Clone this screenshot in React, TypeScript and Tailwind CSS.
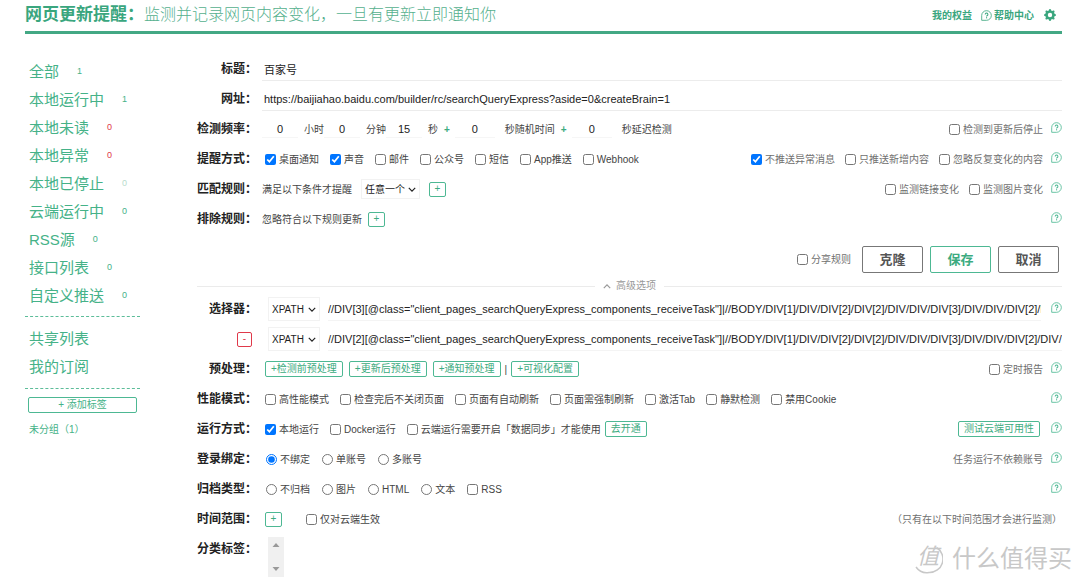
import React, { useId } from 'react';
import { BsGearFill } from 'react-icons/bs';

function HelpIcon() {
  return (
    <svg viewBox="0 0 24 24" className="size-[11px] shrink-0" fill="none" stroke="currentColor" strokeWidth="1.8">
      <path d="M1.500 22.500V12A10.500 10.500 0 1 1 12 22.500H1.500Z" strokeLinejoin="round" />
      <path d="M9.200 9.600a2.900 2.900 0 1 1 4.400 2.500c-1.100.7-1.500 1-1.500 2" strokeWidth="2.200" />
      <path d="M10.900 17h2.400" strokeWidth="2.400" />
    </svg>
  );
}

function Help() {
  return (
    <button type="button" aria-label="帮助" className="mb-1 shrink-0 text-[#4db893]">
      <HelpIcon />
    </button>
  );
}

function Chevron({ up = false }: { up?: boolean }) {
  return (
    <svg viewBox="0 0 10 6" className="h-[5px] w-2 shrink-0" fill="none" stroke="currentColor" strokeWidth="1.5">
      <path d={up ? 'M1 5 5 1l4 4' : 'M1 1l4 4 4-4'} />
    </svg>
  );
}

type RowProps = {
  label?: React.ReactNode;
  htmlFor?: string;
  children?: React.ReactNode;
  right?: React.ReactNode;
  help?: boolean;
};

function Row({ label, htmlFor, children, right, help = false }: RowProps) {
  return (
    <div className="flex h-[30px] items-center">
      <div className="flex w-[60px] shrink-0 justify-end text-xs font-bold whitespace-nowrap text-[#222]">
        {htmlFor ? <label htmlFor={htmlFor}>{label}</label> : label}
      </div>
      <div className="ml-2 flex min-w-0 flex-1 items-center">{children}</div>
      <div className="flex shrink-0 items-center gap-2 text-[#707070]">
        {right && <div className="flex items-center gap-[10px]">{right}</div>}
        {help && <Help />}
      </div>
    </div>
  );
}

function Check({ children, checked = false }: { children: string; checked?: boolean }) {
  return (
    <label className="flex shrink-0 items-center gap-[3px] whitespace-nowrap">
      <input type="checkbox" defaultChecked={checked} className="m-0 size-[11px]" />
      {children}
    </label>
  );
}

function Radio({ children, name, checked = false }: { children: string; name: string; checked?: boolean }) {
  return (
    <label className="flex shrink-0 items-center gap-[3px] whitespace-nowrap">
      <input type="radio" name={name} defaultChecked={checked} className="m-0 size-[11px]" />
      {children}
    </label>
  );
}

function Plus({ label }: { label: string }) {
  return (
    <button
      type="button"
      aria-label={label}
      className="flex h-[15px] w-[17px] items-center justify-center rounded-[2px] border border-[#4db893] text-[10px] leading-none text-[#3cab80]"
    >
      +
    </button>
  );
}

function Tag({ children }: { children: string }) {
  return (
    <button
      type="button"
      className="flex h-4 shrink-0 items-center rounded-[2px] border border-[#4db893] px-[5px] text-[10px] leading-none whitespace-nowrap text-[#3cab80]"
    >
      {children}
    </button>
  );
}

function Num({ value, label, wide = false }: { value: string; label: string; wide?: boolean }) {
  return (
    <input
      aria-label={label}
      defaultValue={value}
      className={`${wide ? 'ml-[5px] w-10' : 'w-9'} h-[18px] border-b border-[#f6f6f6] text-center text-[11px] text-[#222]`}
    />
  );
}

function Choice({ options, label, framed = false }: { options: string[]; label: string; framed?: boolean }) {
  return (
    <span className={`relative flex shrink-0 items-center border border-[#f2f2f2] text-[#222] ${framed ? 'h-6 w-[52px]' : 'h-5 w-[59px]'}`}>
      <select aria-label={label} className="h-full w-full appearance-none bg-transparent pl-[3px] text-[10px]">
        {options.map((o) => (
          <option key={o}>{o}</option>
        ))}
      </select>
      <span className="pointer-events-none absolute right-[3px]">
        <Chevron />
      </span>
    </span>
  );
}

function Field({ id, value }: { id: string; value: string }) {
  return (
    <div className="-ml-[3px] flex-1 border-b border-[#ececec]">
      <input id={id} defaultValue={value} className="block h-[23px] w-full pl-[2px] text-[11px] text-[#222]" />
    </div>
  );
}

const tail = 'DIV/DIV[2]/DIV[2]/DIV/DIV/DIV[3]/DIV/DIV/DIV[2]/DIV/DIV/DIV[1]/DIV';

function XPath({ index, label }: { index: number; label: string }) {
  return (
    <div className="ml-[3px] flex min-w-0 flex-1 items-center gap-2">
      <Choice framed options={['XPATH', 'CSS', 'JS']} label={`${label}类型`} />
      <input
        aria-label={label}
        defaultValue={`//DIV[${index}][@class="client_pages_searchQueryExpress_components_receiveTask"]|//BODY/DIV[1]/${tail}`}
        className="h-6 min-w-0 flex-1 border-b border-[#f4f4f4] text-[11px] text-[#222]"
      />
    </div>
  );
}

const lists = [
  { name: '全部', count: 1 },
  { name: '本地运行中', count: 1 },
  { name: '本地未读', count: 0, tone: 'text-[#e0394a]' },
  { name: '本地异常', count: 0, tone: 'text-[#e0394a]' },
  { name: '本地已停止', count: 0, tone: 'text-[#b9dccd]' },
  { name: '云端运行中', count: 0 },
  { name: 'RSS源', count: 0 },
  { name: '接口列表', count: 0 },
  { name: '自定义推送', count: 0 },
];

function Sidebar() {
  return (
    <aside className="w-[115px] shrink-0 text-[#45b288]">
      <nav className="flex flex-col border-b border-dashed border-[#5cbd99] pt-1 pb-[6px] pl-1">
        {lists.map((l) => (
          <a key={l.name} href="#" className="flex h-7 items-center gap-[18px] text-[15px] whitespace-nowrap">
            {l.name}
            <span className={`text-[9px] ${l.tone ?? ''}`}>{l.count}</span>
          </a>
        ))}
      </nav>
      <nav className="flex flex-col border-b border-dashed border-[#5cbd99] pt-2 pb-[7px] pl-1">
        {['共享列表', '我的订阅'].map((n) => (
          <a key={n} href="#" className="flex h-7 items-center text-[15px]">
            {n}
          </a>
        ))}
      </nav>
      <div className="px-[3px] pt-2 text-[10px]">
        <button
          type="button"
          className="flex h-4 w-full items-center justify-center rounded-[2px] border border-[#4db893] leading-none"
        >
          + 添加标签
        </button>
        <a href="#" className="mt-[9px] block pl-px leading-4">
          未分组（1）
        </a>
      </div>
    </aside>
  );
}

function Action({ children, primary = false }: { children: string; primary?: boolean }) {
  return (
    <button
      type="button"
      className={`h-[27px] w-[61px] rounded-[2px] border text-[13px] leading-none font-bold ${
        primary ? 'border-[#4db893] text-[#3cab80]' : 'border-[#777] text-[#555]'
      }`}
    >
      {children}
    </button>
  );
}

function Watermark() {
  return (
    <div className="pointer-events-none absolute right-2 bottom-[7px] flex items-center gap-[9px] text-[#c8c8c8]">
      <span className="relative flex size-[30px] items-center justify-center">
        <svg viewBox="0 0 30 30" className="absolute inset-0" fill="none" stroke="currentColor" strokeWidth="1.5">
          <path d="M23.500 3.500A13.500 13.500 0 0 1 16 28.500Q8 30 3 23" />
        </svg>
        <span className="-mt-1 text-[22px] leading-none italic">值</span>
      </span>
      <span className="text-[24px] leading-9">什么值得买</span>
    </div>
  );
}

export default function App() {
  const id = useId();
  return (
    <div className="relative bg-white pr-[18px] pb-[7px] pl-[25px] font-['Liberation_Sans','Noto_Sans_CJK_SC',sans-serif] text-[10px] text-[#444]">
      <header className="flex h-[34px] items-center justify-between border-b-[3px] border-[#43a884] pb-px">
        <h1 className="flex items-center text-base whitespace-nowrap text-[#55b08e]">
          <strong className="text-[17px] text-[#3aa67e]">网页更新提醒：</strong>
          <span className="font-light">监测并记录网页内容变化，一旦有更新立即通知你</span>
        </h1>
        <div className="flex items-center pr-[6px] font-bold text-[#3aa67e]">
          <a href="#">我的权益</a>
          <a href="#" className="ml-[9px] flex items-center gap-[2px]">
            <HelpIcon />
            帮助中心
          </a>
          <button type="button" aria-label="设置" className="ml-[10px]">
            <BsGearFill className="size-3" />
          </button>
        </div>
      </header>

      <div className="flex gap-[57px] pt-5">
        <Sidebar />
        <main className="min-w-0 flex-1">
          <Row label="标题：" htmlFor={`${id}title`}>
            <Field id={`${id}title`} value="百家号" />
          </Row>
          <Row label="网址：" htmlFor={`${id}url`}>
            <Field
              id={`${id}url`}
              value="https://baijiahao.baidu.com/builder/rc/searchQueryExpress?aside=0&createBrain=1"
            />
          </Row>
          <Row label="检测频率：" right={<Check>检测到更新后停止</Check>} help>
            <div className="-ml-[3px] flex items-center whitespace-nowrap">
              <Num value="0" label="小时" />
              <span className="ml-[6px]">小时</span>
              <Num value="0" label="分钟" />
              <span className="ml-[6px]">分钟</span>
              <Num value="15" label="秒" />
              <span className="ml-[6px]">秒</span>
              <span className="ml-[6px] font-bold text-[#3cab80]">+</span>
              <Num wide value="0" label="随机秒数" />
              <span className="ml-[10px]">秒随机时间</span>
              <span className="ml-[6px] font-bold text-[#3cab80]">+</span>
              <Num wide value="0" label="延迟秒数" />
              <span className="ml-[10px]">秒延迟检测</span>
            </div>
          </Row>
          <Row
            label="提醒方式："
            help
            right={
              <>
                <Check checked>不推送异常消息</Check>
                <Check>只推送新增内容</Check>
                <Check>忽略反复变化的内容</Check>
              </>
            }
          >
            <div className="flex gap-[11px]">
              <Check checked>桌面通知</Check>
              <Check checked>声音</Check>
              <Check>邮件</Check>
              <Check>公众号</Check>
              <Check>短信</Check>
              <Check>App推送</Check>
              <Check>Webhook</Check>
            </div>
          </Row>
          <Row
            label="匹配规则："
            help
            right={
              <>
                <Check>监测链接变化</Check>
                <Check>监测图片变化</Check>
              </>
            }
          >
            <div className="-ml-[3px] flex items-center gap-[9px]">
              满足以下条件才提醒
              <Choice options={['任意一个', '全部']} label="匹配条件" />
              <Plus label="添加匹配规则" />
            </div>
          </Row>
          <Row label="排除规则：" help>
            <div className="-ml-[3px] flex items-center gap-[6px]">
              忽略符合以下规则更新
              <Plus label="添加排除规则" />
            </div>
          </Row>

          <div className="mt-3 flex items-center justify-end gap-[7px] pr-[3px]">
            <div className="mr-1 text-[#707070]">
              <Check>分享规则</Check>
            </div>
            <Action>克隆</Action>
            <Action primary>保存</Action>
            <Action>取消</Action>
          </div>

          <button type="button" className="mt-[5px] flex h-4 w-full items-center gap-2 text-[#999]">
            <span className="h-px flex-1 bg-[#ebebeb]" />
            <span className="flex items-center gap-[5px] leading-4">
              <Chevron up />
              高级选项
            </span>
            <span className="h-px flex-1 bg-[#ebebeb]" />
          </button>

          <Row label="选择器：" help>
            <XPath index={3} label="选择器一" />
            <span className="w-[10px]" />
          </Row>
          <Row
            label={
              <button
                type="button"
                aria-label="删除选择器"
                className="mr-[5px] flex size-[15px] items-center justify-center rounded-[2px] border border-[#e0394a] text-[10px] leading-none font-normal text-[#e0394a]"
              >
                -
              </button>
            }
          >
            <XPath index={2} label="选择器二" />
          </Row>
          <Row label="预处理：" right={<Check>定时报告</Check>} help>
            <div className="flex items-center gap-[6px]">
              <Tag>+检测前预处理</Tag>
              <Tag>+更新后预处理</Tag>
              <Tag>+通知预处理</Tag>
              <span className="-mx-[2px]">|</span>
              <Tag>+可视化配置</Tag>
            </div>
          </Row>
          <Row label="性能模式：" help>
            <div className="flex gap-[11px]">
              <Check>高性能模式</Check>
              <Check>检查完后不关闭页面</Check>
              <Check>页面有自动刷新</Check>
              <Check>页面需强制刷新</Check>
              <Check>激活Tab</Check>
              <Check>静默检测</Check>
              <Check>禁用Cookie</Check>
            </div>
          </Row>
          <Row
            label="运行方式："
            help
            right={
              <div className="mr-[3px]">
                <Tag>测试云端可用性</Tag>
              </div>
            }
          >
            <div className="flex items-center gap-[11px]">
              <Check checked>本地运行</Check>
              <Check>Docker运行</Check>
              <div className="flex items-center gap-1">
                <Check>云端运行需要开启「数据同步」才能使用</Check>
                <Tag>去开通</Tag>
              </div>
            </div>
          </Row>
          <Row label="登录绑定：" right="任务运行不依赖账号" help>
            <div className="ml-px flex gap-3">
              <Radio name="bind" checked>
                不绑定
              </Radio>
              <Radio name="bind">单账号</Radio>
              <Radio name="bind">多账号</Radio>
            </div>
          </Row>
          <Row label="归档类型：" help>
            <div className="ml-px flex gap-3">
              <Radio name="archive">不归档</Radio>
              <Radio name="archive">图片</Radio>
              <Radio name="archive">HTML</Radio>
              <Radio name="archive">文本</Radio>
              <Check>RSS</Check>
            </div>
          </Row>
          <Row label="时间范围：" right="（只有在以下时间范围才会进行监测）">
            <div className="flex items-center gap-6">
              <Plus label="添加时间范围" />
              <Check>仅对云端生效</Check>
            </div>
          </Row>
          <div className="flex items-start">
            <label htmlFor={`${id}tags`} className="w-[60px] text-right text-xs leading-[30px] font-bold text-[#222]">
              分类标签：
            </label>
            <div className="relative mt-[3px] ml-[11px] h-10 w-4">
              <select
                id={`${id}tags`}
                multiple
                className="block h-full w-full appearance-none overflow-hidden bg-[#f0f0f0]"
              />
              <svg viewBox="0 0 16 40" className="pointer-events-none absolute inset-0" fill="#999">
                <path d="M8 6l3.500 4h-7zM8 34l3.500-4h-7z" />
              </svg>
            </div>
          </div>
        </main>
      </div>
      <Watermark />
    </div>
  );
}
